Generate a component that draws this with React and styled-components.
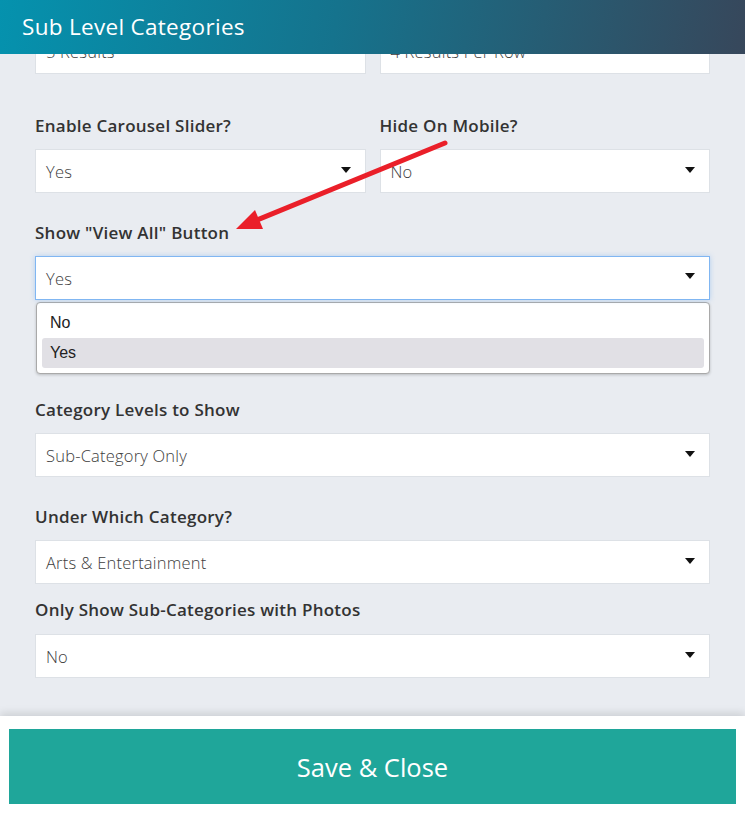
import styled, { createGlobalStyle, css } from "styled-components";

const GlobalStyle = createGlobalStyle`
  * { box-sizing: border-box; }
  html, body { margin: 0; padding: 0; }
  body {
    font-family: "Open Sans", "Liberation Sans", sans-serif;
    background: #e9ecf1;
  }
`

const Page = styled.div`
  position: relative;
  width: 745px;
  height: 814px;
  display: flex;
  flex-direction: column;
  overflow: hidden;
  background: #e9ecf1;
`

const Header = styled.header`
  position: absolute;
  top: 0;
  left: 0;
  right: 0;
  z-index: 2;
  height: 54px;
  display: flex;
  align-items: center;
  padding: 0 22px 2px;
  background: linear-gradient(100deg, #0592ae 0%, #15738d 45%, #37475b 100%);
  color: #fff;
  font-size: 22.5px;
  font-weight: 500;
  letter-spacing: 0.3px;
`

const Body = styled.main`
  flex: 1;
  padding: 30px 35px 0;
`

const Row = styled.div`
  display: grid;
  grid-template-columns: 1fr 1fr;
  gap: 14px;
`

const Field = styled.div`
  margin-top: ${(p) => p.$top ?? 28}px;
`

const Label = styled.div`
  height: 24px;
  line-height: 24px;
  margin-bottom: ${(p) => p.$gap ?? 11}px;
  font-size: 17px;
  font-weight: 600;
  letter-spacing: 0.25px;
  color: #333;
  white-space: nowrap;
`

const Select = styled.div`
  position: relative;
  height: 44px;
  display: flex;
  align-items: center;
  padding: 0 40px 0 10px;
  background: #fff;
  border: 1px solid #dde1e6;
  font-size: 16.5px;
  font-weight: 300;
  letter-spacing: 0.2px;
  color: #3d3d3d;

  &::after {
    content: "";
    position: absolute;
    right: 14px;
    top: 50%;
    margin-top: -4px;
    border-left: 5px solid transparent;
    border-right: 5px solid transparent;
    border-top: 6px solid #111;
  }

  ${(p) =>
    p.$focus &&
    css`
      border-color: #80b6f2;
      box-shadow: 0 0 5px rgba(110, 170, 240, 0.45);
      &::after { margin-top: -5px; }
    `}

  ${(p) =>
    p.$cut &&
    css`
      align-items: flex-start;
      padding-top: 9px;
    `}
`

const Menu = styled.ul`
  list-style: none;
  margin: 2px 0 0 1px;
  padding: 5px;
  background: #fff;
  border: 1px solid #a9a9a9;
  border-radius: 4px;
  box-shadow: 0 1px 3px rgba(0, 0, 0, 0.2);
  font-family: "Liberation Sans", Arial, sans-serif;
  font-size: 16px;
  color: #222;
`

const Option = styled.li`
  height: 30px;
  line-height: 30px;
  padding-left: 8px;
  border-radius: 3px;
  background: ${(p) => (p.$active ? "#e1e0e5" : "transparent")};
`

const Footer = styled.footer`
  position: relative;
  z-index: 1;
  height: 98px;
  padding: 13px 9px 10px;
  background: #fff;
  box-shadow: 0 -3px 8px rgba(0, 0, 0, 0.12);
`

const SaveButton = styled.button`
  width: 100%;
  height: 75px;
  border: 0;
  background: #1fa69a;
  color: #fff;
  font-family: inherit;
  font-size: 25.5px;
  font-weight: 400;
  cursor: pointer;
`

const Pointer = styled.svg`
  position: absolute;
  left: 0;
  top: 0;
  z-index: 3;
  pointer-events: none;
`

const App = () => {
  return (
    <Page>
      <GlobalStyle />
      <Header>Sub Level Categories</Header>

      <Body>
        <Row>
          <Select $cut>5 Results</Select>
          <Select $cut>4 Results Per Row</Select>
        </Row>

        <Row>
          <Field $top={40}>
            <Label>Enable Carousel Slider?</Label>
            <Select>Yes</Select>
          </Field>
          <Field $top={40}>
            <Label>Hide On Mobile?</Label>
            <Select>No</Select>
          </Field>
        </Row>

        <Field>
          <Label>Show "View All" Button</Label>
          <Select $focus>Yes</Select>
          <Menu>
            <Option>No</Option>
            <Option $active>Yes</Option>
          </Menu>
        </Field>

        <Field $top={24}>
          <Label>Category Levels to Show</Label>
          <Select>Sub-Category Only</Select>
        </Field>

        <Field>
          <Label>Under Which Category?</Label>
          <Select>Arts &amp; Entertainment</Select>
        </Field>

        <Field $top={14}>
          <Label $gap={12}>Only Show Sub-Categories with Photos</Label>
          <Select>No</Select>
        </Field>
      </Body>

      <Footer>
        <SaveButton>Save &amp; Close</SaveButton>
      </Footer>

      <Pointer width="745" height="814" viewBox="0 0 745 814">
        <line x1="445" y1="143" x2="252" y2="222" stroke="#ea1f29" strokeWidth="5" strokeLinecap="round" />
        <polygon points="236,229 255,210 263,229" fill="#ea1f29" />
      </Pointer>
    </Page>
  )
}

export default App;
